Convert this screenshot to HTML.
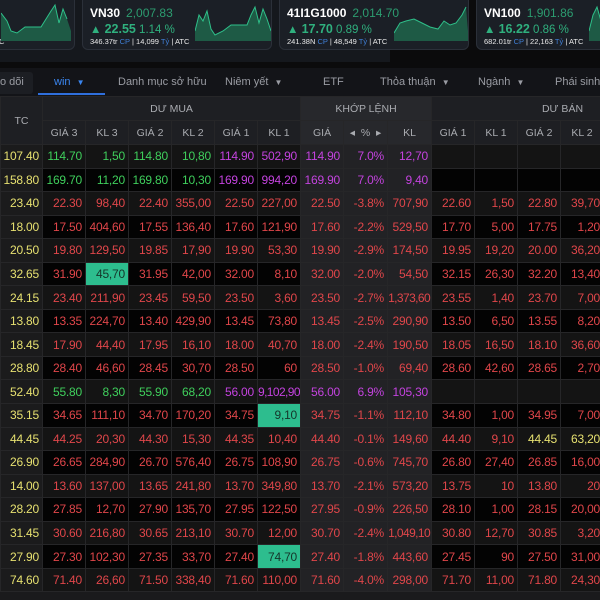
<!DOCTYPE html>
<html><head><meta charset="utf-8"><style>
*{margin:0;padding:0;box-sizing:border-box}
body{width:600px;height:600px;overflow:hidden;background:#0b0b0c;font-family:"Liberation Sans",sans-serif;position:relative}
.strip{position:absolute;left:0;top:0;width:390px;height:62px;background:#15181d}
.card{position:absolute;top:-6px;height:56px;background:#1b1f26;border:1px solid #2b3039;border-radius:6px;overflow:hidden}
.card .n{position:absolute;left:7px;top:11px;font-size:12px;font-weight:bold;color:#fff}
.card .v{color:#2c9c70;font-weight:normal;margin-left:6px}
.card .c{position:absolute;left:7px;top:27px;font-size:11.5px;color:#2fb07e}
.card .c b{font-size:12.5px}
.card .d{position:absolute;left:7px;top:42px;font-size:7.5px;color:#e8e8e8;white-space:nowrap}
.card .d i{font-style:normal;color:#3f7fd6}
.card svg{position:absolute;top:6px}
.tabs{position:absolute;left:0;top:68px;width:600px;height:28px;background:#131418;font-size:11px;color:#9a9ca3}
.tabs span{position:absolute;top:8px;white-space:nowrap}
.srch{position:absolute;left:-5px;top:4px;width:38px;height:22px;background:#1c1e23;border-radius:3px}
.ul{position:absolute;left:38px;top:25px;width:67px;height:2px;background:#2f6fdc}
table{position:absolute;left:0;top:96px;border-collapse:collapse;table-layout:fixed;width:602px}
td,th{border:1px solid #262628;font-size:12px;white-space:nowrap;overflow:hidden}
th{background:#1e1f23;color:#a9abb0;font-weight:normal;height:24px;font-size:10.5px}
th.k{background:#27282c}
td{height:23.56px;text-align:right;padding-right:3px;color:#e0464a;letter-spacing:-0.2px}
tr.o td{background:#141414}
tr.e td{background:#030303}
td.tc{background:#1b1b1c!important;color:#e6e070}
td.k{background:#222225!important}
.g{color:#3fcf5c}.p{color:#c443df}.y{color:#e6e070}
td.h{background:#2dbd8e!important;color:#15352a}
.bot{position:absolute;left:0;top:592px;width:600px;height:8px;background:#1a1a1c}
</style></head><body>
<div class="strip"></div>
<div class="card" style="left:-20px;width:95px"><div class="d" style="left:18px">C</div>
<svg style="left:20px" width="70" height="40" viewBox="0 0 70 40"><path d="M0 12 L6 20 L10 30 L16 32 L24 26 L40 26 L50 10 L54 4 L58 22 L62 8 L66 18 L70 30 L70 40 L0 40Z" fill="#1e5a45"/><path d="M0 12 L6 20 L10 30 L16 32 L24 26 L40 26 L50 10 L54 4 L58 22 L62 8 L66 18" stroke="#2fc08a" fill="none"/></svg></div>
<div class="card" style="left:82px;width:190px"><div class="n">VN30<span class="v">2,007.83</span></div><div class="c">▲ <b>22.55</b> 1.14 %</div><div class="d">346.37tr <i>CP</i> | 14,099 <i>Tỷ</i> | ATC</div>
<svg style="left:112px" width="76" height="40" viewBox="0 0 76 40"><path d="M0 30 L4 14 L8 20 L12 10 L16 28 L20 34 L28 30 L36 24 L52 24 L56 14 L60 6 L64 22 L68 8 L72 18 L76 30 L76 40 L0 40Z" fill="#1e5a45"/><path d="M0 30 L4 14 L8 20 L12 10 L16 28 L20 34 L28 30 L36 24 L52 24 L56 14 L60 6 L64 22 L68 8 L72 18 L76 30" stroke="#2fc08a" fill="none"/></svg></div>
<div class="card" style="left:279px;width:190px"><div class="n">41I1G1000<span class="v">2,014.70</span></div><div class="c">▲ <b>17.70</b> 0.89 %</div><div class="d">241.38N <i>CP</i> | 48,549 <i>Tỷ</i> | ATC</div>
<svg style="left:114px" width="74" height="40" viewBox="0 0 74 40"><path d="M0 32 L6 22 L12 20 L20 18 L28 22 L36 26 L44 28 L50 20 L56 24 L62 22 L68 14 L72 6 L74 30 L74 40 L0 40Z" fill="#1e5a45"/><path d="M0 32 L6 22 L12 20 L20 18 L28 22 L36 26 L44 28 L50 20 L56 24 L62 22 L68 14 L72 6" stroke="#2fc08a" fill="none"/></svg></div>
<div class="card" style="left:476px;width:140px"><div class="n">VN100<span class="v">1,901.86</span></div><div class="c">▲ <b>16.22</b> 0.86 %</div><div class="d">682.01tr <i>CP</i> | 22,163 <i>Tỷ</i> | ATC</div>
<svg style="left:112px" width="30" height="40" viewBox="0 0 30 40"><path d="M0 30 L4 14 L8 6 L12 20 L16 28 L30 28 L30 40 L0 40Z" fill="#1e5a45"/><path d="M0 30 L4 14 L8 6 L12 20 L16 28" stroke="#2fc08a" fill="none"/></svg></div>

<div class="tabs"><div class="srch"></div><span style="left:0">o dõi</span><span style="left:54px;color:#3a86f0">win &nbsp;<span style="position:static;font-size:8px">▼</span></span><div class="ul"></div>
<span style="left:118px">Danh mục sở hữu</span><span style="left:225px">Niêm yết &nbsp;<span style="position:static;font-size:8px">▼</span></span><span style="left:323px">ETF</span><span style="left:380px">Thỏa thuận &nbsp;<span style="position:static;font-size:8px">▼</span></span><span style="left:478px">Ngành &nbsp;<span style="position:static;font-size:8px">▼</span></span><span style="left:555px">Phái sinh</span></div>

<table>
<colgroup><col style="width:42px"><col style="width:43px"><col style="width:43px"><col style="width:43px"><col style="width:43px"><col style="width:43px"><col style="width:43px"><col style="width:43px"><col style="width:44px"><col style="width:44px"><col style="width:43px"><col style="width:43px"><col style="width:43px"><col style="width:43px"></colgroup>
<tr><th rowspan="2">TC</th><th colspan="6">DƯ MUA</th><th colspan="3" class="k">KHỚP LỆNH</th><th colspan="4" style="text-align:right;padding-right:20px">DƯ BÁN</th></tr>
<tr><th>GIÁ 3</th><th>KL 3</th><th>GIÁ 2</th><th>KL 2</th><th>GIÁ 1</th><th>KL 1</th><th class="k">GIÁ</th><th class="k">◂ &nbsp;% &nbsp;▸</th><th class="k">KL</th><th>GIÁ 1</th><th>KL 1</th><th>GIÁ 2</th><th>KL 2</th></tr>
<tr class="o"><td class="tc">107.40</td><td class="g">114.70</td><td class="g">1,50</td><td class="g">114.80</td><td class="g">10,80</td><td class="p">114.90</td><td class="p">502,90</td><td class="k p">114.90</td><td class="k p">7.0%</td><td class="k p">12,70</td><td></td><td></td><td></td><td></td></tr>
<tr class="e"><td class="tc">158.80</td><td class="g">169.70</td><td class="g">11,20</td><td class="g">169.80</td><td class="g">10,30</td><td class="p">169.90</td><td class="p">994,20</td><td class="k p">169.90</td><td class="k p">7.0%</td><td class="k p">9,40</td><td></td><td></td><td></td><td></td></tr>
<tr class="o"><td class="tc">23.40</td><td>22.30</td><td>98,40</td><td>22.40</td><td>355,00</td><td>22.50</td><td>227,00</td><td class="k">22.50</td><td class="k">-3.8%</td><td class="k">707,90</td><td>22.60</td><td>1,50</td><td>22.80</td><td>39,70</td></tr>
<tr class="e"><td class="tc">18.00</td><td>17.50</td><td>404,60</td><td>17.55</td><td>136,40</td><td>17.60</td><td>121,90</td><td class="k">17.60</td><td class="k">-2.2%</td><td class="k">529,50</td><td>17.70</td><td>5,00</td><td>17.75</td><td>1,20</td></tr>
<tr class="o"><td class="tc">20.50</td><td>19.80</td><td>129,50</td><td>19.85</td><td>17,90</td><td>19.90</td><td>53,30</td><td class="k">19.90</td><td class="k">-2.9%</td><td class="k">174,50</td><td>19.95</td><td>19,20</td><td>20.00</td><td>36,20</td></tr>
<tr class="e"><td class="tc">32.65</td><td>31.90</td><td class="h">45,70</td><td>31.95</td><td>42,00</td><td>32.00</td><td>8,10</td><td class="k">32.00</td><td class="k">-2.0%</td><td class="k">54,50</td><td>32.15</td><td>26,30</td><td>32.20</td><td>13,40</td></tr>
<tr class="o"><td class="tc">24.15</td><td>23.40</td><td>211,90</td><td>23.45</td><td>59,50</td><td>23.50</td><td>3,60</td><td class="k">23.50</td><td class="k">-2.7%</td><td class="k" style="letter-spacing:-0.6px;padding-right:1px">1,373,60</td><td>23.55</td><td>1,40</td><td>23.70</td><td>7,00</td></tr>
<tr class="e"><td class="tc">13.80</td><td>13.35</td><td>224,70</td><td>13.40</td><td>429,90</td><td>13.45</td><td>73,80</td><td class="k">13.45</td><td class="k">-2.5%</td><td class="k">290,90</td><td>13.50</td><td>6,50</td><td>13.55</td><td>8,20</td></tr>
<tr class="o"><td class="tc">18.45</td><td>17.90</td><td>44,40</td><td>17.95</td><td>16,10</td><td>18.00</td><td>40,70</td><td class="k">18.00</td><td class="k">-2.4%</td><td class="k">190,50</td><td>18.05</td><td>16,50</td><td>18.10</td><td>36,60</td></tr>
<tr class="e"><td class="tc">28.80</td><td>28.40</td><td>46,60</td><td>28.45</td><td>30,70</td><td>28.50</td><td>60</td><td class="k">28.50</td><td class="k">-1.0%</td><td class="k">69,40</td><td>28.60</td><td>42,60</td><td>28.65</td><td>2,70</td></tr>
<tr class="o"><td class="tc">52.40</td><td class="g">55.80</td><td class="g">8,30</td><td class="g">55.90</td><td class="g">68,20</td><td class="p">56.00</td><td class="p" style="letter-spacing:-0.6px;padding-right:1px">9,102,90</td><td class="k p">56.00</td><td class="k p">6.9%</td><td class="k p">105,30</td><td></td><td></td><td></td><td></td></tr>
<tr class="e"><td class="tc">35.15</td><td>34.65</td><td>111,10</td><td>34.70</td><td>170,20</td><td>34.75</td><td class="h">9,10</td><td class="k">34.75</td><td class="k">-1.1%</td><td class="k">112,10</td><td>34.80</td><td>1,00</td><td>34.95</td><td>7,00</td></tr>
<tr class="o"><td class="tc">44.45</td><td>44.25</td><td>20,30</td><td>44.30</td><td>15,30</td><td>44.35</td><td>10,40</td><td class="k">44.40</td><td class="k">-0.1%</td><td class="k">149,60</td><td>44.40</td><td>9,10</td><td class="y">44.45</td><td class="y">63,20</td></tr>
<tr class="e"><td class="tc">26.90</td><td>26.65</td><td>284,90</td><td>26.70</td><td>576,40</td><td>26.75</td><td>108,90</td><td class="k">26.75</td><td class="k">-0.6%</td><td class="k">745,70</td><td>26.80</td><td>27,40</td><td>26.85</td><td>16,00</td></tr>
<tr class="o"><td class="tc">14.00</td><td>13.60</td><td>137,00</td><td>13.65</td><td>241,80</td><td>13.70</td><td>349,80</td><td class="k">13.70</td><td class="k">-2.1%</td><td class="k">573,20</td><td>13.75</td><td>10</td><td>13.80</td><td>20</td></tr>
<tr class="e"><td class="tc">28.20</td><td>27.85</td><td>12,70</td><td>27.90</td><td>135,70</td><td>27.95</td><td>122,50</td><td class="k">27.95</td><td class="k">-0.9%</td><td class="k">226,50</td><td>28.10</td><td>1,00</td><td>28.15</td><td>20,00</td></tr>
<tr class="o"><td class="tc">31.45</td><td>30.60</td><td>216,80</td><td>30.65</td><td>213,10</td><td>30.70</td><td>12,00</td><td class="k">30.70</td><td class="k">-2.4%</td><td class="k" style="letter-spacing:-0.6px;padding-right:1px">1,049,10</td><td>30.80</td><td>12,70</td><td>30.85</td><td>3,20</td></tr>
<tr class="e"><td class="tc">27.90</td><td>27.30</td><td>102,30</td><td>27.35</td><td>33,70</td><td>27.40</td><td class="h">74,70</td><td class="k">27.40</td><td class="k">-1.8%</td><td class="k">443,60</td><td>27.45</td><td>90</td><td>27.50</td><td>31,00</td></tr>
<tr class="o"><td class="tc">74.60</td><td>71.40</td><td>26,60</td><td>71.50</td><td>338,40</td><td>71.60</td><td>110,00</td><td class="k">71.60</td><td class="k">-4.0%</td><td class="k">298,00</td><td>71.70</td><td>11,00</td><td>71.80</td><td>24,30</td></tr>
</table>
<div class="bot"></div>
</body></html>
